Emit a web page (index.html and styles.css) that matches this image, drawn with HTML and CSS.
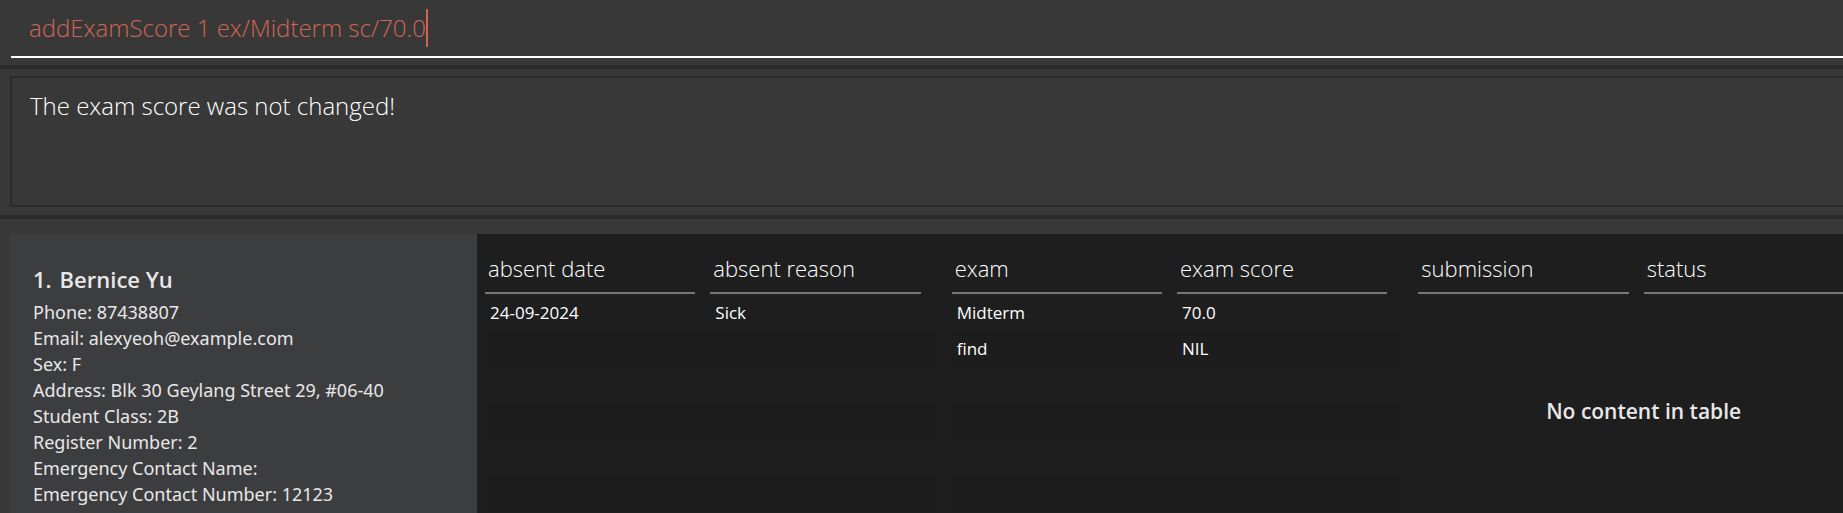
FILE: index.html
```html
<!DOCTYPE html>
<html lang="en">
<head>
<meta charset="utf-8">
<title>Student records</title>
<link rel="stylesheet" href="styles.css">
</head>
<body>
<div class="app">
  <form class="command">
    <div class="command-line">
      <input class="command-input" type="text" aria-label="Command" size="30" value="addExamScore 1 ex/Midterm sc/70.0" spellcheck="false" autocomplete="off">
    </div>
  </form>
  <section class="result">
    <output class="result-box">The exam score was not changed!</output>
  </section>
  <main class="student">
    <section class="details">
      <h1 class="name"><span>1.</span><span>Bernice Yu</span></h1>
      <p class="field">Phone: 87438807</p>
      <p class="field">Email: alexyeoh@example.com</p>
      <p class="field">Sex: F</p>
      <p class="field">Address: Blk 30 Geylang Street 29, #06-40</p>
      <p class="field">Student Class: 2B</p>
      <p class="field">Register Number: 2</p>
      <p class="field">Emergency Contact Name:</p>
      <p class="field">Emergency Contact Number: 12123</p>
    </section>
    <section class="records">
      <div class="tables">
        <table class="table">
          <thead><tr><th scope="col"><div class="heading">absent date</div></th><th scope="col"><div class="heading">absent reason</div></th></tr></thead>
          <tbody>
            <tr><td>24-09-2024</td><td>Sick</td></tr>
            <tr><td></td><td></td></tr>
            <tr><td></td><td></td></tr>
            <tr><td></td><td></td></tr>
            <tr><td></td><td></td></tr>
            <tr><td></td><td></td></tr>
          </tbody>
        </table>
        <table class="table">
          <thead><tr><th scope="col"><div class="heading">exam</div></th><th scope="col"><div class="heading">exam score</div></th></tr></thead>
          <tbody>
            <tr><td>Midterm</td><td>70.0</td></tr>
            <tr><td>find</td><td>NIL</td></tr>
            <tr><td></td><td></td></tr>
            <tr><td></td><td></td></tr>
            <tr><td></td><td></td></tr>
            <tr><td></td><td></td></tr>
          </tbody>
        </table>
        <table class="table">
          <thead><tr><th scope="col"><div class="heading">submission</div></th><th scope="col"><div class="heading">status</div></th></tr></thead>
          <tbody><tr class="empty"><td colspan="2">No content in table</td></tr></tbody>
        </table>
      </div>
    </section>
  </main>
</div>
</body>
</html>
```
FILE: styles.css
```css
* { box-sizing: border-box; }

body {
  margin: 0;
  background: #383838;
  color: #e8e8e8;
  font-family: "Open Sans", "Noto Sans", sans-serif;
  overflow: hidden;
}

.app {
  display: flex;
  flex-direction: column;
  height: 100vh;
}

.command {
  padding: 0 0 7px 11px;
  border-bottom: 4px solid #2b2b2b;
}

.command-line {
  display: flex;
  padding: 9px 0 9px 18px;
  border-bottom: 2px solid #fff;
}

.command-input {
  field-sizing: content;
  height: 38px;
  padding: 0;
  border: 0;
  border-right: 2px solid #d06651;
  outline: 0;
  background: transparent;
  color: #d06651;
  font: 300 24px/38px "Open Sans", "Noto Sans", sans-serif;
}

.result {
  padding: 7px 0 8px 10px;
  border-bottom: 4px solid #2b2b2b;
}

.result-box {
  display: block;
  min-height: 131px;
  padding: 9px 18px;
  border: 2px solid #2b2b2b;
  border-right: 0;
  color: #fff;
  font-size: 24px;
  font-weight: 300;
  line-height: 38px;
}

.student {
  display: flex;
  flex: 1;
  min-height: 0;
  padding: 15px 0 0 10px;
}

.details {
  flex: none;
  width: 467px;
  padding: 28px 22px 0 23px;
  background: #3c3d3f;
}

.name {
  display: flex;
  gap: 8px;
  margin: 0 0 3px;
  font-size: 22px;
  font-weight: 600;
  line-height: 34px;
}

.field {
  margin: 0;
  font-family: "Noto Sans", "Open Sans", sans-serif;
  font-size: 18px;
  line-height: 26px;
}

.records {
  flex: 1;
  min-width: 0;
  padding: 16px 0 0 8px;
  background: #1e1e1e;
}

/* The tables run on past the right edge of the window. */
.tables {
  display: grid;
  grid-template-columns: repeat(3, 1fr);
  gap: 16px;
  height: 100%;
  margin-right: -26px;
  align-items: start;
}

.table {
  width: 100%;
  table-layout: fixed;
  border-collapse: collapse;
}

.table th {
  padding: 0 15px 1px 0;
  text-align: left;
}

.heading {
  padding: 2px 3px 8px;
  border-bottom: 2px solid #777;
  color: #fff;
  font-size: 22px;
  font-weight: 300;
  line-height: 32px;
}

.table td {
  height: 36px;
  padding: 0 5px;
  color: #fff;
  font-size: 17px;
  line-height: 24px;
}

.table tbody tr:nth-child(even) { background: #1d1d1d; }

.table .empty td {
  height: 232px;
  color: #e8e8e8;
  font-size: 21px;
  font-weight: 600;
  text-align: center;
}
```
